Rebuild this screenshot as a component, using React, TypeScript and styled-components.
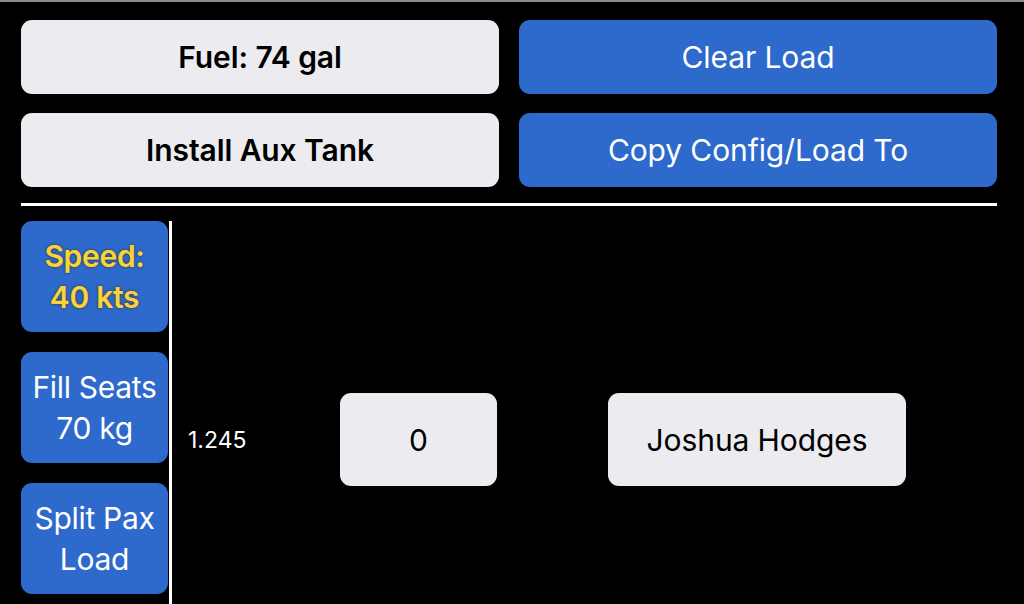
import React from "react";
import styled, { createGlobalStyle } from "styled-components";

const Global = createGlobalStyle`
  html, body {
    margin: 0;
    padding: 0;
    background: #000;
  }
  body {
    font-family: Inter, "Noto Sans", "Liberation Sans", sans-serif;
    -webkit-font-smoothing: antialiased;
  }
  #root {
    width: 1024px;
    height: 604px;
    overflow: hidden;
  }
`;

const Screen = styled.div`
  width: 1024px;
  height: 604px;
  box-sizing: border-box;
  background: #000;
  border-top: 2px solid #8d8d8f;
  display: flex;
  flex-direction: column;
  padding: 18px 27px 0 21px;
  overflow: hidden;
`;

const TopGrid = styled.div`
  display: grid;
  grid-template-columns: 478px 478px;
  grid-template-rows: 74px 74px;
  column-gap: 20px;
  row-gap: 19px;
`;

const Button = styled.button<{ $variant: "light" | "blue"; $bold?: boolean }>`
  border: none;
  margin: 0;
  padding: 0;
  border-radius: 11px;
  background: ${(p) => (p.$variant === "blue" ? "#2e69cc" : "#ebebf0")};
  color: ${(p) => (p.$variant === "blue" ? "#ffffff" : "#000000")};
  font-family: Inter, "Noto Sans", "Liberation Sans", sans-serif;
  font-size: 30px;
  font-weight: ${(p) => (p.$bold ? 600 : 400)};
  letter-spacing: -0.1px;
  display: flex;
  align-items: center;
  justify-content: center;
  text-align: center;
`;

const Divider = styled.div`
  height: 3px;
  background: #ffffff;
  margin-top: 16px;
`;

const Lower = styled.div`
  flex: 1;
  display: flex;
  margin-top: 15px;
  min-height: 0;
`;

const SideColumn = styled.div`
  width: 147px;
  display: flex;
  flex-direction: column;
  gap: 20px;
`;

const SideButton = styled.button<{ $highlight?: boolean }>`
  border: none;
  margin: 0;
  padding: 0;
  height: 111px;
  flex: none;
  border-radius: 11px;
  background: #2e69cc;
  color: ${(p) => (p.$highlight ? "#f8d33e" : "#ffffff")};
  font-family: Inter, "Noto Sans", "Liberation Sans", sans-serif;
  font-size: 30px;
  font-weight: ${(p) => (p.$highlight ? 600 : 400)};
  line-height: 41px;
  letter-spacing: -0.3px;
  white-space: nowrap;
  text-shadow: ${(p) => (p.$highlight ? "0 0 3px rgba(60, 50, 0, 0.9)" : "none")};
  display: flex;
  align-items: center;
  justify-content: center;
  text-align: center;
`;

const VerticalRule = styled.div`
  width: 3px;
  margin-left: 1px;
  background: #ffffff;
  align-self: stretch;
  flex: none;
`;

const Content = styled.div`
  flex: 1;
  padding-top: 172px;
  padding-left: 16px;
`;

const Row = styled.div`
  display: flex;
  align-items: center;
  height: 93px;
`;

const Ratio = styled.span`
  width: 152px;
  color: #ffffff;
  font-size: 23px;
  flex: none;
`;

const Field = styled.div<{ $w: number; $ml?: number }>`
  width: ${(p) => p.$w}px;
  margin-left: ${(p) => p.$ml ?? 0}px;
  height: 93px;
  border-radius: 11px;
  background: #ebebf0;
  color: #000;
  font-size: 30px;
  letter-spacing: -0.1px;
  display: flex;
  align-items: center;
  justify-content: center;
  flex: none;
`;

export default function App() {
  return (
    <>
      <Global />
      <Screen>
        <TopGrid>
          <Button $variant="light" $bold>
            Fuel: 74 gal
          </Button>
          <Button $variant="blue">Clear Load</Button>
          <Button $variant="light" $bold>
            Install Aux Tank
          </Button>
          <Button $variant="blue">Copy Config/Load To</Button>
        </TopGrid>
        <Divider />
        <Lower>
          <SideColumn>
            <SideButton $highlight>
              Speed:
              <br />
              40 kts
            </SideButton>
            <SideButton>
              Fill Seats
              <br />
              70 kg
            </SideButton>
            <SideButton>
              Split Pax
              <br />
              Load
            </SideButton>
          </SideColumn>
          <VerticalRule />
          <Content>
            <Row>
              <Ratio>1.245</Ratio>
              <Field $w={157}>0</Field>
              <Field $w={298} $ml={111}>
                Joshua Hodges
              </Field>
            </Row>
          </Content>
        </Lower>
      </Screen>
    </>
  );
}
